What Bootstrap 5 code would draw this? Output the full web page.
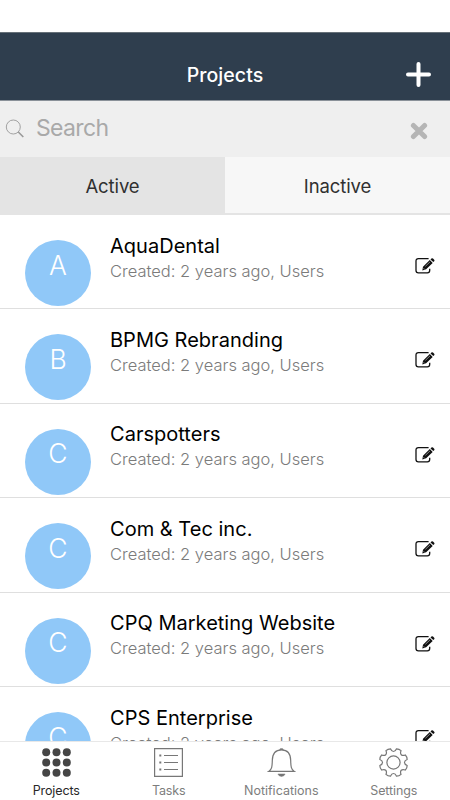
<!DOCTYPE html>
<html lang="en">
<head>
<meta charset="utf-8">
<meta name="viewport" content="width=device-width, initial-scale=1">
<title>Projects</title>
<link href="https://cdn.jsdelivr.net/npm/bootstrap@5.3.0/dist/css/bootstrap.min.css" rel="stylesheet">
<style>
body { font-family: Inter, "Liberation Sans", sans-serif; color: #000; height: 800px; font-weight: 400; }
svg { display: block; flex: none; }
.status-space { height: 32px; }
.top-bar { height: 69px; background: #2f3e4e; border-top: 1px solid #667078; border-bottom: 1px solid #8a9199; padding: 16px 19px 0 0; }
.top-title { color: #fff; font-size: 19.5px; font-weight: 500; letter-spacing: .08px; line-height: 24px; padding-left: 44px; }
.search-row { height: 56px; background: #efefef; padding: 0 22px 0 5px; }
.search-row input, .search-row input:focus { background: transparent; font-size: 23px; letter-spacing: -.65px; line-height: 30px; padding: 0 0 3px 11px; box-shadow: none; }
.search-row input::placeholder { color: #a9a9a9; opacity: 1; }
.tabs-row { height: 58px; background: #f7f7f7; border-bottom: 2px solid #e4e4e4; }
.tabs-row button { font-size: 18.5px; letter-spacing: -.1px; color: #303030; border-radius: 0; padding: 3px 0 0; border: 0; }
.tabs-row .chosen { background: #e4e4e4; }
.project { height: 94.45px; flex: none; border-bottom: 1.5px solid #dfdfdf; padding: 0 15px 0 25px; }
.avatar { width: 66px; height: 66px; background: #90c8f8; color: #fff; font-size: 26.5px; font-weight: 350; line-height: 32px; padding-top: 8.5px; margin: 25px 19px 0 0; flex: none; }
.project-text { padding-top: 17.5px; white-space: nowrap; }
.project-name { font-size: 20px; line-height: 26px; letter-spacing: .02px; }
.project-meta { font-size: 16.5px; line-height: 25px; color: #7b7b7b; font-weight: 350; }
.project-edit { margin-top: 42px; }
.bottom-bar { height: 59px; border-top: 1px solid #e8e8e8; font-size: 12.5px; color: #7d7d7d; background: #fff; }
.bottom-bar a { color: inherit; padding-top: 6px; }
.bottom-bar .current { color: #282828; }
.bottom-bar span { line-height: 16px; margin-top: 5.5px; letter-spacing: 0; }
.bottom-bar .current span, .bottom-bar .tight span { letter-spacing: -.1px; }
</style>
<script src="https://cdn.jsdelivr.net/npm/bootstrap@5.3.0/dist/js/bootstrap.bundle.min.js"></script>
</head>
<body class="d-flex flex-column overflow-hidden bg-white">
<svg width="0" height="0" class="position-absolute" aria-hidden="true">
  <symbol id="edit" viewBox="0 0 20 18">
    <path d="M13.6 1.7H3.4Q1 1.7 1 4.1v9.3Q1 15.8 3.4 15.8h8.9q2.4 0 2.4-2.4v-1.6" fill="none" stroke="#111" stroke-width="1.3"/>
    <path d="M16.4 1.6q.8-.7 1.6 0l1.2 1.1q.7.7 0 1.5l-.9.9-2.8-2.6zM14.8 3.1l2.9 2.8-6.6 6.4-3.8 1.3.7-3.9z" fill="#111"/>
    <path d="M10.4 9.3l4.6-4.4M8.5 11.2l1.1 1.1" stroke="#fff" stroke-width=".5"/>
  </symbol>
</svg>
<div class="status-space flex-shrink-0"></div>
<header class="top-bar d-flex align-items-center flex-shrink-0">
  <h1 class="top-title mb-0 flex-grow-1 text-center">Projects</h1>
  <svg width="25" height="25" viewBox="0 0 25 25"><path d="M12.5 2v21M2 12.5h21" stroke="#fff" stroke-width="4" stroke-linecap="round"/></svg>
</header>
<div class="search-row d-flex align-items-center flex-shrink-0">
  <svg width="20" height="20" viewBox="0 0 20 20" fill="none" stroke="#999"><circle cx="8.3" cy="8" r="7" stroke-width=".9"/><path d="M13.3 13l5 5" stroke-width="1.6"/></svg>
  <input class="form-control border-0" type="text" placeholder="Search" aria-label="Search">
  <svg class="mt-1" width="18" height="18" viewBox="0 0 18 18"><path d="M3.4 3.4l11.2 11.2M14.6 3.4L3.4 14.6" stroke="#b5b5b5" stroke-width="5" stroke-linecap="round"/></svg>
</div>
<div class="tabs-row d-flex flex-shrink-0">
  <button class="btn w-50 chosen">Active</button>
  <button class="btn w-50">Inactive</button>
</div>
<main class="flex-grow-1 overflow-hidden d-flex flex-column" id="projects"></main>
<nav class="bottom-bar d-flex flex-shrink-0">
  <a href="#" class="w-25 d-flex flex-column align-items-center text-decoration-none current">
    <svg width="29" height="29" viewBox="0 0 29 29" fill="#454545"><circle cx="4.2" cy="4.2" r="4"/><circle cx="14.5" cy="4.2" r="4"/><circle cx="24.8" cy="4.2" r="4"/><circle cx="4.2" cy="14.5" r="4"/><circle cx="14.5" cy="14.5" r="4"/><circle cx="24.8" cy="14.5" r="4"/><circle cx="4.2" cy="24.8" r="4"/><circle cx="14.5" cy="24.8" r="4"/><circle cx="24.8" cy="24.8" r="4"/></svg>
    <span>Projects</span>
  </a>
  <a href="#" class="w-25 d-flex flex-column align-items-center text-decoration-none tight">
    <svg width="29" height="29" viewBox="0 0 29 29" fill="none" stroke="#777"><path d="M.6.6h27.8v27.8H.6z" stroke-width="1.2"/><path d="M10 7.5h14M10 14.5h14M10 21.5h14"/><path d="M5.3 7.5h2M5.3 14.5h2M5.3 21.5h2" stroke-width="2"/></svg>
    <span>Tasks</span>
  </a>
  <a href="#" class="w-25 d-flex flex-column align-items-center text-decoration-none">
    <svg width="29" height="29" viewBox="0 0 29 29" fill="none" stroke="#777" stroke-width="1.2"><path d="M1.7 23.4C5 21.5 5.2 18 5.3 12.5 5.4 6 8.3 1.8 14.5 1.8s9.1 4.2 9.2 10.7c.1 5.5.3 9 3.6 10.9z"/><path d="M12.7 1.7q0-1.3 1.8-1.3t1.8 1.3zM10.9 26h7.2q-.8 2.4-3.6 2.4T10.9 26z" fill="#777" stroke-width=".5"/></svg>
    <span>Notifications</span>
  </a>
  <a href="#" class="w-25 d-flex flex-column align-items-center text-decoration-none tight">
    <svg id="gear" width="29" height="29" viewBox="-14.5 -14.5 29 29" fill="none" stroke="#777" stroke-width="1.2"><circle r="6.6"/><path/></svg>
    <span>Settings</span>
  </a>
</nav>
<script>
const names = ["AquaDental", "BPMG Rebranding", "Carspotters", "Com & Tec inc.", "CPQ Marketing Website", "CPS Enterprise"];
const list = document.getElementById("projects");
for (const name of names) {
  const row = document.createElement("article");
  row.className = "project d-flex align-items-start";
  row.innerHTML = `<div class="avatar rounded-circle text-center">${name[0]}</div>
    <div class="project-text flex-grow-1"><div class="project-name"></div><div class="project-meta">Created: 2 years ago, Users</div></div>
    <svg class="project-edit" width="20" height="18"><use href="#edit"/></svg>`;
  row.querySelector(".project-name").textContent = name;
  list.append(row);
}
// Gear outline: eight short, rounded teeth joined by concave curves.
let d = "";
const at = (r, deg) => { const a = deg * Math.PI / 180; return (r * Math.cos(a)).toFixed(2) + " " + (r * Math.sin(a)).toFixed(2); };
for (let i = 0; i < 8; i++) {
  const c = i * 45 + 22.5;
  d += (i ? "L" : "M") + at(14, c - 10) + "Q" + at(14.8, c) + " " + at(14, c + 10) + "C" + at(10.2, c + 14) + " " + at(10.2, c + 31) + " " + at(14, c + 35);
}
document.querySelector("#gear path").setAttribute("d", d + "Z");
</script>
</body>
</html>
